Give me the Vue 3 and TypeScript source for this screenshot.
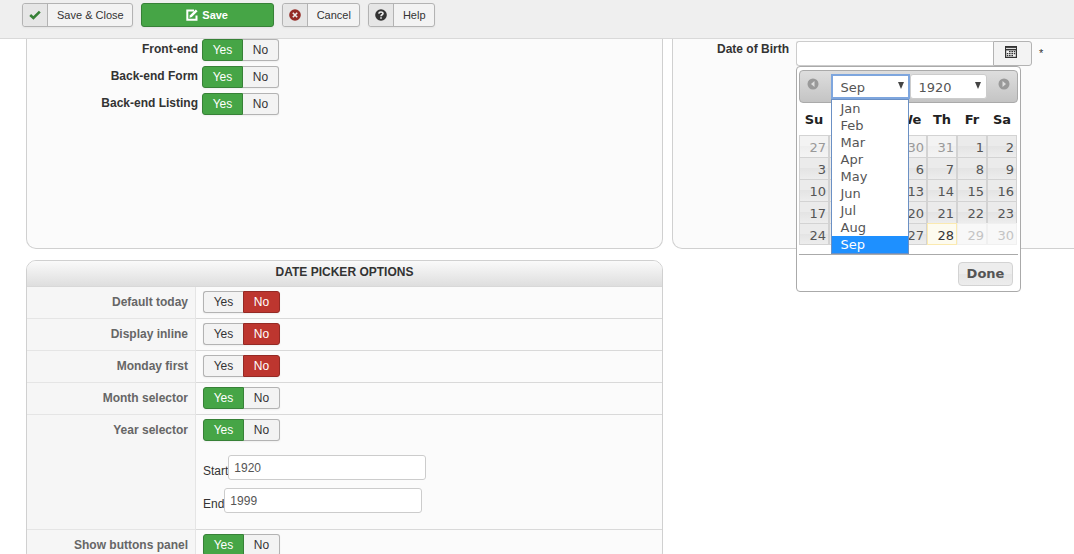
<script setup lang="ts">
import { ref } from 'vue'

interface Toggle { label: string; on: boolean; years?: boolean }
interface Day { n: number; kind?: 'other' | 'off' | 'today' }

const visibility = ref<Toggle[]>([
  { label: 'Front-end', on: true },
  { label: 'Back-end Form', on: true },
  { label: 'Back-end Listing', on: true },
])

const options = ref<Toggle[]>([
  { label: 'Default today', on: false },
  { label: 'Display inline', on: false },
  { label: 'Monday first', on: false },
  { label: 'Month selector', on: true },
  { label: 'Year selector', on: true, years: true },
  { label: 'Show buttons panel', on: true },
])

const birth = ref('')
const startYear = ref('1920')
const endYear = ref('1999')
const months = ['Jan', 'Feb', 'Mar', 'Apr', 'May', 'Jun', 'Jul', 'Aug', 'Sep']
const month = ref('Sep')
const year = ref('1920')
const weekdays = ['Su', 'Mo', 'Tu', 'We', 'Th', 'Fr', 'Sa']

const weeks: Day[][] = []
for (let w = 0; w < 5; w++) {
  const row: Day[] = []
  for (let d = 0; d < 7; d++) {
    const i = w * 7 + d - 4
    if (i < 1) row.push({ n: i + 31, kind: 'other' })
    else row.push({ n: i, kind: i === 28 ? 'today' : i > 28 ? 'off' : undefined })
  }
  weeks.push(row)
}
</script>

<template>
  <div class="page">
    <header class="toolbar">
      <button type="button" class="tool">
        <span class="tool-icon">
          <svg width="12" height="10" viewBox="0 0 12 10"><path d="M1.2 5 4.4 8 10.8 1.6" fill="none" stroke="#378137" stroke-width="2.6" /></svg>
        </span>
        <span class="tool-text">Save &amp; Close</span>
      </button>
      <button type="button" class="tool save">
        <svg width="12" height="12" viewBox="0 0 12 12">
          <path d="M8 1.5H1.3v9.2h9.2V6.5" fill="none" stroke="#fff" stroke-width="2" />
          <path d="M3.4 8.7 4 6.2 9.8.4l1.8 1.8L5.8 8z" fill="#fff" />
        </svg>
        Save
      </button>
      <button type="button" class="tool">
        <span class="tool-icon">
          <svg width="12" height="12" viewBox="0 0 12 12"><circle cx="6" cy="6" r="5.8" fill="#942a25" /><path d="m3.8 3.8 4.4 4.4m0-4.4L3.8 8.2" stroke="#eee" stroke-width="1.6" /></svg>
        </span>
        <span class="tool-text">Cancel</span>
      </button>
      <button type="button" class="tool">
        <span class="tool-icon">
          <svg width="12" height="12" viewBox="0 0 12 12"><circle cx="6" cy="6" r="5.8" fill="#333" /><path d="M3.8 4.6C4 2.4 8 2.4 8 4.5 8 5.8 6 5.7 6 7.2" fill="none" stroke="#eee" stroke-width="1.6" /><path d="M5.2 8.2h1.6v1.5H5.2z" fill="#eee" /></svg>
        </span>
        <span class="tool-text">Help</span>
      </button>
    </header>

    <main class="columns">
      <div class="left">
        <section class="panel upper visibility">
          <div v-for="t in visibility" :key="t.label" class="vis-row">
            <span class="vis-label">{{ t.label }}</span>
            <span class="toggle" role="group" :aria-label="t.label">
              <button type="button" class="yes" :class="{ on: t.on }" :aria-pressed="t.on" @click="t.on = true">Yes</button>
              <button type="button" class="no" :class="{ on: !t.on }" :aria-pressed="!t.on" @click="t.on = false">No</button>
            </span>
          </div>
        </section>

        <section class="panel options">
          <h2>DATE PICKER OPTIONS</h2>
          <table>
            <tbody>
              <tr v-for="t in options" :key="t.label">
                <th scope="row">{{ t.label }}</th>
                <td>
                  <span class="toggle" role="group" :aria-label="t.label">
                    <button type="button" class="yes" :class="{ on: t.on }" :aria-pressed="t.on" @click="t.on = true">Yes</button>
                    <button type="button" class="no" :class="{ on: !t.on }" :aria-pressed="!t.on" @click="t.on = false">No</button>
                  </span>
                  <div v-if="t.years" class="years">
                    <div class="year-row"><label for="start-year">Start</label><input id="start-year" v-model="startYear" type="text" /></div>
                    <div class="year-row"><label for="end-year">End</label><input id="end-year" v-model="endYear" type="text" /></div>
                  </div>
                </td>
              </tr>
            </tbody>
          </table>
        </section>
      </div>

      <section class="panel upper preview">
        <label class="birth-label" for="birth">Date of Birth</label>
        <div class="field">
          <input id="birth" v-model="birth" type="text" />
          <button type="button" class="cal-button" aria-label="Open calendar">
            <svg width="12" height="12" viewBox="0 0 12 12">
              <path d="M0 0h12v12H0z" fill="#333" />
              <path d="M1 2.4h10" stroke="#f3f3f3" stroke-width="1" />
              <path d="M1.2 4.4h9.6v6.4H1.2z" fill="#f3f3f3" />
              <path d="M4 5h1.6v1.2H4zM6.4 5H8v1.2H6.4zM8.8 5h1.4v1.2H8.8zM1.8 7h1.5v1.2H1.8zM4 7h1.6v1.2H4zM6.4 7H8v1.2H6.4zM8.8 7h1.4v1.2H8.8zM1.8 9h1.5v1.2H1.8zM4 9h1.6v1.2H4zM6.4 9H8v1.2H6.4z" fill="#333" />
            </svg>
          </button>

          <div class="picker">
            <div class="picker-head">
              <button type="button" class="nav" aria-label="Previous month">
                <svg width="12" height="12" viewBox="0 0 12 12"><circle cx="6" cy="6" r="5.5" fill="#999" /><path d="M7.5 3v6L4 6z" fill="#ddd" /></svg>
              </button>
              <div class="selects">
                <div class="select-wrap month">
                  <select v-model="month" aria-label="Month"><option v-for="m in months" :key="m">{{ m }}</option></select>
                  <svg class="arrow" width="6" height="7" viewBox="0 0 6 7"><path d="M0 0h6L3 7z" fill="#444" /></svg>
                  <ul class="menu" role="listbox" aria-label="Month">
                    <li v-for="m in months" :key="m" role="option" :aria-selected="m === month" :class="{ picked: m === month }" @click="month = m">{{ m }}</li>
                  </ul>
                </div>
                <div class="select-wrap year">
                  <select v-model="year" aria-label="Year"><option>1920</option><option>1921</option></select>
                  <svg class="arrow" width="6" height="7" viewBox="0 0 6 7"><path d="M0 0h6L3 7z" fill="#444" /></svg>
                </div>
              </div>
              <button type="button" class="nav" aria-label="Next month">
                <svg width="12" height="12" viewBox="0 0 12 12"><circle cx="6" cy="6" r="5.5" fill="#999" /><path d="M4.5 3v6L8 6z" fill="#ddd" /></svg>
              </button>
            </div>
            <table class="days">
              <colgroup><col class="c30" /><col class="c34" /><col class="c30" /><col class="c34" /><col class="c30" /><col class="c30" /><col class="c30" /></colgroup>
              <thead><tr><th v-for="w in weekdays" :key="w" scope="col">{{ w }}</th></tr></thead>
              <tbody>
                <tr v-for="(week, i) in weeks" :key="i">
                  <td v-for="d in week" :key="d.n"><a href="#" :class="d.kind">{{ d.n }}</a></td>
                </tr>
              </tbody>
            </table>
            <div class="picker-foot"><button type="button" class="done">Done</button></div>
          </div>
        </div>
        <span class="required">*</span>
      </section>
    </main>
  </div>
</template>

<style>
body { margin: 0; background: #fff; }
</style>

<style scoped>
* { box-sizing: border-box; }
.page {
  height: 100vh;
  overflow-x: hidden;
  overflow-y: auto;
  scrollbar-width: none;
  font: 12px/16px "Liberation Sans", Arial, sans-serif;
  color: #333;
}
button, input, select { font: inherit; color: inherit; margin: 0; }
svg { display: block; flex: none; }

.toolbar {
  position: sticky;
  top: 0;
  z-index: 5;
  display: flex;
  align-items: flex-start;
  gap: 8px;
  height: 39px;
  padding: 3px 22px;
  background: #efefef;
  border-bottom: 1px solid #d9d9d9;
}
.tool {
  display: flex;
  height: 24px;
  padding: 0;
  font-size: 11px;
  background: #f3f3f3;
  border: 1px solid #b3b3b3;
  border-radius: 3px;
  box-shadow: 0 1px 2px rgba(0, 0, 0, .05);
}
.tool-icon {
  display: flex;
  align-items: center;
  justify-content: center;
  align-self: stretch;
  width: 25px;
  background: #e6e6e6;
  border-right: 1px solid #b3b3b3;
  border-radius: 3px 0 0 3px;
}
.tool-text { padding: 0 8px 0 9px; line-height: 23px; }
.save {
  align-items: center;
  justify-content: center;
  gap: 4px;
  width: 133px;
  color: #fff;
  font-weight: bold;
  background: #46a546;
  border-color: #378137;
}

.columns {
  display: grid;
  grid-template-columns: minmax(0, 637fr) minmax(0, 411fr);
  gap: 9px;
  padding-left: 26px;
  margin-right: -9px;
  align-items: start;
}
.panel { background: #fbfbfb; border: 1px solid #d0d0d0; border-radius: 10px; }
.upper { min-height: 210px; border-top: 0; border-radius: 0 0 10px 10px; }
.visibility { display: flex; flex-direction: column; gap: 5px; }
.vis-row { display: flex; gap: 4px; height: 22px; }
.vis-label { width: 171px; text-align: right; font-weight: bold; line-height: 21px; }

.toggle { display: flex; width: 77px; height: 22px; border-radius: 3px; box-shadow: 0 1px 2px rgba(0, 0, 0, .05); }
.toggle button {
  flex: 1;
  padding: 0;
  line-height: 20px;
  background: #f3f3f3;
  border: 1px solid #b3b3b3;
}
.toggle .yes { flex: 41; border-radius: 3px 0 0 3px; border-right: 0; }
.toggle .no { flex: 37; border-radius: 0 3px 3px 0; border-left: 0; }
.toggle .on { color: #fff; }
.toggle .yes.on { background: #46a546; border: 1px solid #378137; }
.toggle .no.on { background: #bd362f; border: 1px solid #942a25; }

.options { margin-top: 11px; overflow: hidden; }
h2 {
  margin: 0;
  height: 26px;
  font-size: 12px;
  line-height: 23px;
  text-align: center;
  background: linear-gradient(#fafafa, #dedede);
  border-bottom: 1px solid #d8d8d8;
}
.options table { width: 100%; border-spacing: 0; table-layout: fixed; }
.options th {
  width: 169px;
  padding: 7px 7px 0 0;
  vertical-align: top;
  text-align: right;
  color: #666;
  background: #f6f6f6;
  border-right: 1px solid #e5e5e5;
  border-bottom: 1px solid #e5e5e5;
}
.options td { padding: 4px 7px 5px; vertical-align: top; border-bottom: 1px solid #d9d9d9; }
.years { display: flex; flex-direction: column; gap: 8px; padding: 14px 0 11px; }
.year-row { display: flex; }
.year-row label { padding-top: 8px; line-height: 17px; }
.year-row input { width: 198px; height: 25px; padding: 0 5px; color: #555; background: #fff; border: 1px solid #ccc; border-radius: 3px; }

.preview { display: flex; padding-top: 2px; }
.birth-label { width: 116px; height: 16px; font-weight: bold; text-align: right; }
.field { position: relative; display: flex; width: 236px; height: 25px; margin-left: 7px; }
.field > input { flex: 1; min-width: 0; padding: 0 5px; background: #fff; border: 1px solid #ccc; border-right: 0; border-radius: 3px 0 0 3px; }
.cal-button {
  display: flex;
  justify-content: center;
  align-items: flex-start;
  width: 39px;
  padding: 4px 3px 0 0;
  background: #f3f3f3;
  border: 1px solid #b3b3b3;
  border-radius: 0 3px 3px 0;
}
.required { margin: 4px 0 0 7px; font-size: 11px; }

.picker {
  position: absolute;
  z-index: 2;
  top: 100%;
  left: 0;
  width: 225px;
  padding: 3px 2px 5px;
  font: 13px/17px "DejaVu Sans", Verdana, sans-serif;
  color: #444;
  background: #fff;
  border: 1px solid #aaa;
  border-radius: 4px;
}
.picker-head {
  display: flex;
  justify-content: space-between;
  height: 33px;
  padding: 3px 7px;
  background: linear-gradient(#dedede, #c4c4c4);
  border: 1px solid #aaa;
  border-radius: 4px;
}
.nav { height: 20px; padding: 0; background: none; border: 0; }
.selects { display: flex; align-items: flex-start; }
.select-wrap { position: relative; height: 25px; }
.month { width: 79px; }
.year { width: 77px; }
select { appearance: none; display: block; width: 100%; height: 100%; padding: 2px 8px 0; color: #555; background: #fff; border: 1px solid #ccc; border-radius: 3px; }
.month select { border: 2px solid #7ea6de; border-radius: 0; }
.arrow { position: absolute; top: 8px; right: 6px; }
.menu {
  position: absolute;
  z-index: 3;
  top: 100%;
  left: 0;
  width: 78px;
  margin: 0;
  padding: 0;
  list-style: none;
  color: #555;
  background: #fff;
  border: 1px solid #6b90c4;
}
.menu li { height: 17px; padding-left: 9px; }
.menu .picked { color: #fff; background: #1e90ff; }

.days { width: 218px; border-collapse: collapse; table-layout: fixed; }
.c30 { width: 30px; }
.c34 { width: 34px; }
.days th { height: 32px; padding: 0; color: #222; text-align: center; }
.days td { padding: 0; }
.days a {
  display: block;
  height: 22px;
  padding: 3px 2px 0 0;
  line-height: 17px;
  text-align: right;
  text-decoration: none;
  color: #555;
  background: linear-gradient(#ebebeb 50%, #e4e4e4 50%, #ededed);
  border: 1px solid #d3d3d3;
  border-bottom: 0;
}
.days tr:last-child a { border-bottom: 1px solid #d3d3d3; }
.days a.other { color: #999; background: linear-gradient(#f3f3f3 50%, #eee 50%, #f4f4f4); }
.days tr:last-child a.off { color: #c4c4c4; background: #f8f8f8; border-color: #f0f0f0; }
.days tr:last-child a.today { color: #363636; background: #fdfbef; border-color: #fbeab0; }
.picker-foot { display: flex; justify-content: flex-end; margin-top: 9px; padding: 7px 5px 0 0; border-top: 1px solid #aaa; }
.done { width: 55px; height: 24px; padding: 0 0 2px; font-weight: bold; color: #555; background: linear-gradient(#ededed 50%, #e6e6e6 50%, #ededed); border: 1px solid #d3d3d3; border-radius: 4px; }
</style>
